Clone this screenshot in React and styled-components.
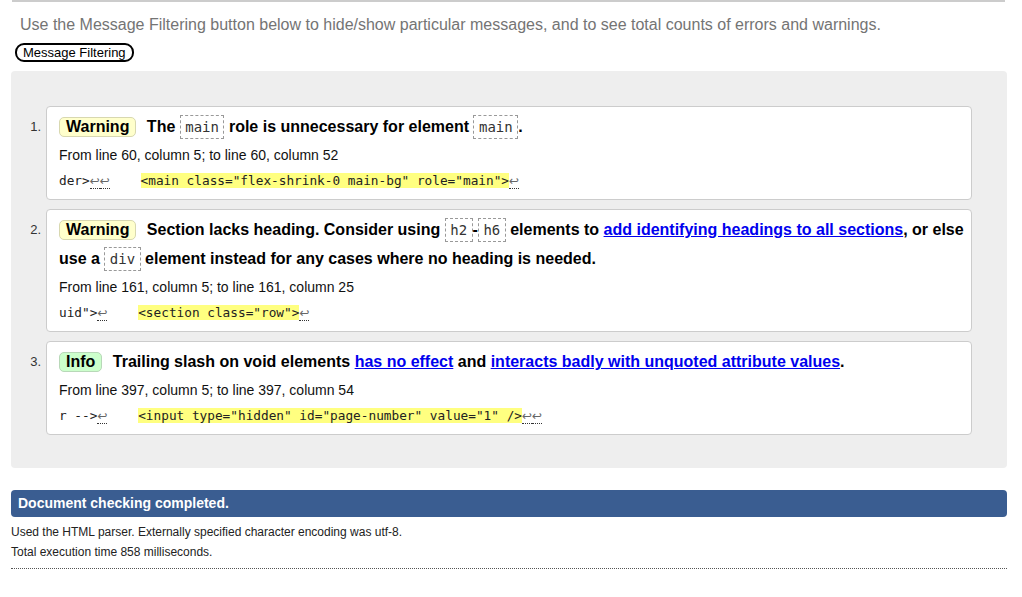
import React from "react";
import styled, { createGlobalStyle } from "styled-components";

const Global = createGlobalStyle`
  html, body { margin: 0; padding: 0; background: #fff; }
  body { font-family: "Liberation Sans", Arial, sans-serif; color: #000; }
`;

const Page = styled.div`
  margin-left: 11px;
  width: 996px;
`;

const Rule = styled.div`
  margin: 0 2px 0 1px;
  border-top: 2px solid #cccccc;
`;

const Intro = styled.p`
  margin: 13px 0 0 0;
  padding-left: 9px;
  font-size: 16px;
  line-height: 20px;
  color: #747474;
`;

const FilterButton = styled.button`
  display: block;
  margin: 8px 0 0 4px;
  padding: 0 6px;
  font-family: "Liberation Sans", Arial, sans-serif;
  font-size: 13px;
  line-height: 15px;
  color: #000;
  background: #fff;
  border: 2px solid #000;
  border-radius: 9px;
`;

const Panel = styled.ol`
  list-style: none;
  margin: 9px 0 0 0;
  padding: 35px 35px 33px 0;
  background: #eeeeee;
  border-radius: 4px;
  display: flex;
  flex-direction: column;
  gap: 9px;
`;

const Item = styled.li`
  display: grid;
  grid-template-columns: 35px 1fr;
`;

const Num = styled.span`
  text-align: right;
  padding-right: 5px;
  padding-top: 6px;
  font-size: 13px;
  line-height: 29px;
  color: #333;
`;

const Card = styled.div`
  background: #fff;
  border: 1px solid #cccccc;
  border-radius: 4px;
  padding: 5px 4px 8px 12px;
`;

const Header = styled.p`
  margin: 0;
  font-size: 16px;
  font-weight: bold;
  line-height: 29px;
`;

const Badge = styled.span`
  display: inline-block;
  padding: 0 6px;
  margin-right: 6px;
  line-height: 18px;
  border: 1px solid ${(p) => (p.$kind === "info" ? "#b8d8b8" : "#d8d8b0")};
  border-radius: 5px;
  background: ${(p) => (p.$kind === "info" ? "#ccffcc" : "#ffffcc")};
`;

const Tag = styled.code`
  font-family: "DejaVu Sans Mono", monospace;
  font-weight: normal;
  font-size: 14px;
  line-height: 1;
  padding: 3px 4.5px;
  border: 1px dashed #999;
  color: #333;
`;

const Link = styled.a`
  color: #0000ee;
  text-decoration: underline;
`;

const Location = styled.p`
  margin: 4px 0 0 0;
  font-size: 14px;
  line-height: 20px;
  color: #111;
`;

const Extract = styled.p`
  margin: 6px 0 0 0;
  font-family: "DejaVu Sans Mono", monospace;
  font-size: 12.75px;
  line-height: 20px;
  white-space: pre;
  color: #222;
`;

const Mark = styled.span`
  background: #ffff80;
`;

const Lf = styled.span`
  font-family: "DejaVu Sans", sans-serif;
  font-size: 12px;
  line-height: 1;
  color: #666;
  border-bottom: 1px dotted #333;
`;

const DoneBar = styled.div`
  margin-top: 22px;
  height: 27px;
  padding-left: 7px;
  border-radius: 4px;
  background: #3a5d91;
  color: #fff;
  font-size: 14px;
  font-weight: bold;
  line-height: 27px;
`;

const Footer = styled.div`
  padding-top: 5px;
`;

const Note = styled.p`
  margin: 0;
  font-size: 12px;
  line-height: 20px;
  color: #222;
`;

const Dotted = styled.div`
  margin-top: 6px;
  border-top: 1px dotted #555;
`;

const LF = () => <Lf>↩</Lf>;

export default function App() {
  return (
    <>
      <Global />
      <Page>
        <Rule />
        <Intro>
          Use the Message Filtering button below to hide/show particular messages, and to see total counts of errors and warnings.
        </Intro>
        <FilterButton>Message Filtering</FilterButton>
        <Panel>
          <Item>
            <Num>1.</Num>
            <Card>
              <Header>
                <Badge $kind="warning">Warning</Badge> The <Tag>main</Tag> role is unnecessary for element <Tag>main</Tag>.
              </Header>
              <Location>From line 60, column 5; to line 60, column 52</Location>
              <Extract>
                {"der>"}<LF /><LF />{"    "}
                <Mark>{'<main class="flex-shrink-0 main-bg" role="main">'}</Mark>
                <LF />
              </Extract>
            </Card>
          </Item>
          <Item>
            <Num>2.</Num>
            <Card>
              <Header>
                <Badge $kind="warning">Warning</Badge> Section lacks heading. Consider using <Tag>h2</Tag>-<Tag>h6</Tag> elements to{" "}
                <Link href="#">add identifying headings to all sections</Link>, or else use a <Tag>div</Tag> element instead for any cases where no heading is needed.
              </Header>
              <Location>From line 161, column 5; to line 161, column 25</Location>
              <Extract>
                {'uid">'}<LF />{"    "}
                <Mark>{'<section class="row">'}</Mark>
                <LF />
              </Extract>
            </Card>
          </Item>
          <Item>
            <Num>3.</Num>
            <Card>
              <Header>
                <Badge $kind="info">Info</Badge> Trailing slash on void elements <Link href="#">has no effect</Link> and{" "}
                <Link href="#">interacts badly with unquoted attribute values</Link>.
              </Header>
              <Location>From line 397, column 5; to line 397, column 54</Location>
              <Extract>
                {"r -->"}<LF />{"    "}
                <Mark>{'<input type="hidden" id="page-number" value="1" />'}</Mark>
                <LF /><LF />
              </Extract>
            </Card>
          </Item>
        </Panel>
        <DoneBar>Document checking completed.</DoneBar>
        <Footer>
          <Note>Used the HTML parser. Externally specified character encoding was utf-8.</Note>
          <Note>Total execution time 858 milliseconds.</Note>
        </Footer>
        <Dotted />
      </Page>
    </>
  );
}
